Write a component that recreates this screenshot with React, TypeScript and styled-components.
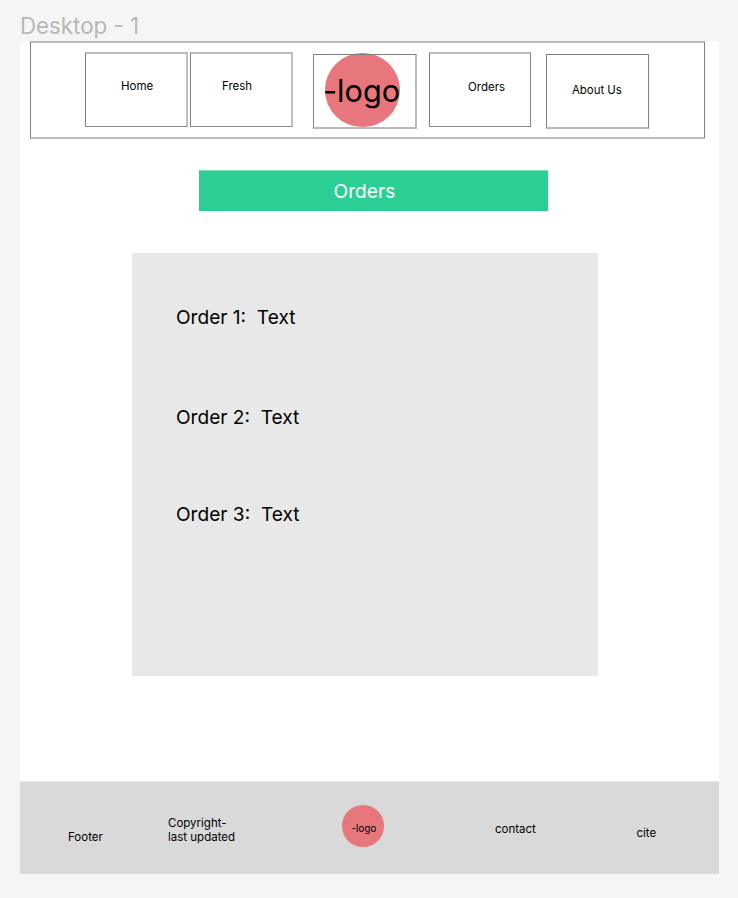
import React from "react";
import styled, { createGlobalStyle } from "styled-components";

const GlobalStyle = createGlobalStyle`
  * { box-sizing: border-box; }
  html, body { margin: 0; background: #f5f5f5; }
  body { font-family: Inter, sans-serif; color: #000; }
`;

const Canvas = styled.div`
  width: 738px;
  height: 898px;
  padding: 9px 19px 0 20px;
  overflow: hidden;
`;

const FrameTitle = styled.div`
  height: 32px;
  padding-top: 1px;
  font-size: 22.3px;
  line-height: 32px;
  color: #b8b8b8;
  white-space: nowrap;
`;

const Frame = styled.div`
  display: flex;
  flex-direction: column;
  height: 833px;
  border-top: 1px solid #fafafa;
  background: #fff;
`;

const Nav = styled.nav`
  display: flex;
  align-items: flex-start;
  width: 675px;
  height: 98px;
  margin: -1px 0 0 10px;
  padding: 9px 0 0 54px;
  border: solid;
  border-width: 2px 1px;
  border-color: #bdbdbd #808080;
`;

const NavItem = styled.a<{ $gap?: number; $x: number; $y: number }>`
  flex: none;
  width: 103px;
  height: 75px;
  margin-left: ${(p) => p.$gap ?? 0}px;
  padding: ${(p) => p.$y}px 0 0 ${(p) => p.$x}px;
  border: solid;
  border-width: 2px 2px 1px 1px;
  border-color: #bababa #c0c0c0 #888 #808080;
  font-size: 11.5px;
  line-height: 14px;
  white-space: nowrap;
`;

const OrdersItem = styled(NavItem)`
  width: 102px;
  border-right-width: 1px;
  border-right-color: #888;
`;

const AboutItem = styled(NavItem)`
  margin-top: 2px;
  border-width: 1px 1px 2px;
  border-color: #808080 #808080 #bababa;
  font-size: 11.4px;
`;

const LogoBox = styled.a`
  position: relative;
  flex: none;
  width: 104px;
  height: 75px;
  margin: 2px 0 0 20px;
  border: solid;
  border-width: 1px 2px 2px 1px;
  border-color: #808080 #bababa #bababa #808080;
`;

const NavDisc = styled.span`
  position: absolute;
  z-index: -1;
  left: 11px;
  top: -2.4px;
  width: 75px;
  height: 74.4px;
  border-radius: 50%;
  background: #e8777d;
`;

const LogoText = styled.span`
  position: absolute;
  left: 9px;
  top: 17px;
  font-size: 30.7px;
  line-height: 37px;
  white-space: nowrap;
`;

const NavLayer = styled.div`
  position: relative;
  z-index: 0;
`;

const Banner = styled.h1`
  width: 349px;
  height: 41px;
  margin: 31px 0 0 179px;
  padding-left: 134.5px;
  border-top: 1px solid #7be0bb;
  background: #2bcf93;
  color: #fff;
  font-size: 19.2px;
  font-weight: 400;
  line-height: 40px;
`;

const OrderList = styled.ul`
  width: 466px;
  height: 423px;
  margin: 42px 0 0 112px;
  padding: 52px 0 0 44px;
  background: #e8e8e8;
  list-style: none;
`;

const OrderRow = styled.li<{ $h: number }>`
  height: ${(p) => p.$h}px;
  font-size: 19.1px;
  line-height: 24px;
  white-space: pre;
`;

const Footer = styled.footer`
  display: flex;
  align-items: flex-start;
  height: 93px;
  margin-top: auto;
  border-top: 1px solid #e8e8e8;
  background: #d9d9d9;
`;

const FooterText = styled.span<{ $w: number; $y: number }>`
  flex: none;
  width: ${(p) => p.$w}px;
  padding-top: ${(p) => p.$y}px;
  font-size: 11.5px;
  line-height: 14px;
  white-space: pre;
  &:first-child { margin-left: 48px; }
`;

const FooterLogo = styled.span`
  flex: none;
  width: 42.5px;
  height: 42px;
  margin: 23px 111px 0 0.5px;
  padding-left: 10px;
  border-radius: 50%;
  background: #e8777d;
  font-size: 9.7px;
  line-height: 47px;
  letter-spacing: 0.1px;
`;

const orders = [
  { label: "Order 1:  Text", height: 100 },
  { label: "Order 2:  Text", height: 97 },
  { label: "Order 3:  Text", height: 24 },
];

export default function App() {
  return (
    <Canvas>
      <GlobalStyle />
      <FrameTitle>Desktop - 1</FrameTitle>
      <Frame>
        <NavLayer>
          <Nav>
            <NavItem $x={35} $y={25}>Home</NavItem>
            <NavItem $gap={2} $x={31} $y={25}>Fresh</NavItem>
            <LogoBox>
              <NavDisc />
              <LogoText>-logo</LogoText>
            </LogoBox>
            <OrdersItem $gap={12} $x={38} $y={26}>Orders</OrdersItem>
            <AboutItem $gap={15} $x={25} $y={28}>About Us</AboutItem>
          </Nav>
        </NavLayer>
        <Banner>Orders</Banner>
        <OrderList>
          {orders.map((o) => (
            <OrderRow key={o.label} $h={o.height}>{o.label}</OrderRow>
          ))}
        </OrderList>
        <Footer>
          <FooterText $w={100} $y={48}>Footer</FooterText>
          <FooterText $w={173} $y={34}>{"Copyright-\nlast updated"}</FooterText>
          <FooterLogo>-logo</FooterLogo>
          <FooterText $w={141.5} $y={40}>contact</FooterText>
          <FooterText $w={40} $y={44}>cite</FooterText>
        </Footer>
      </Frame>
    </Canvas>
  );
}
